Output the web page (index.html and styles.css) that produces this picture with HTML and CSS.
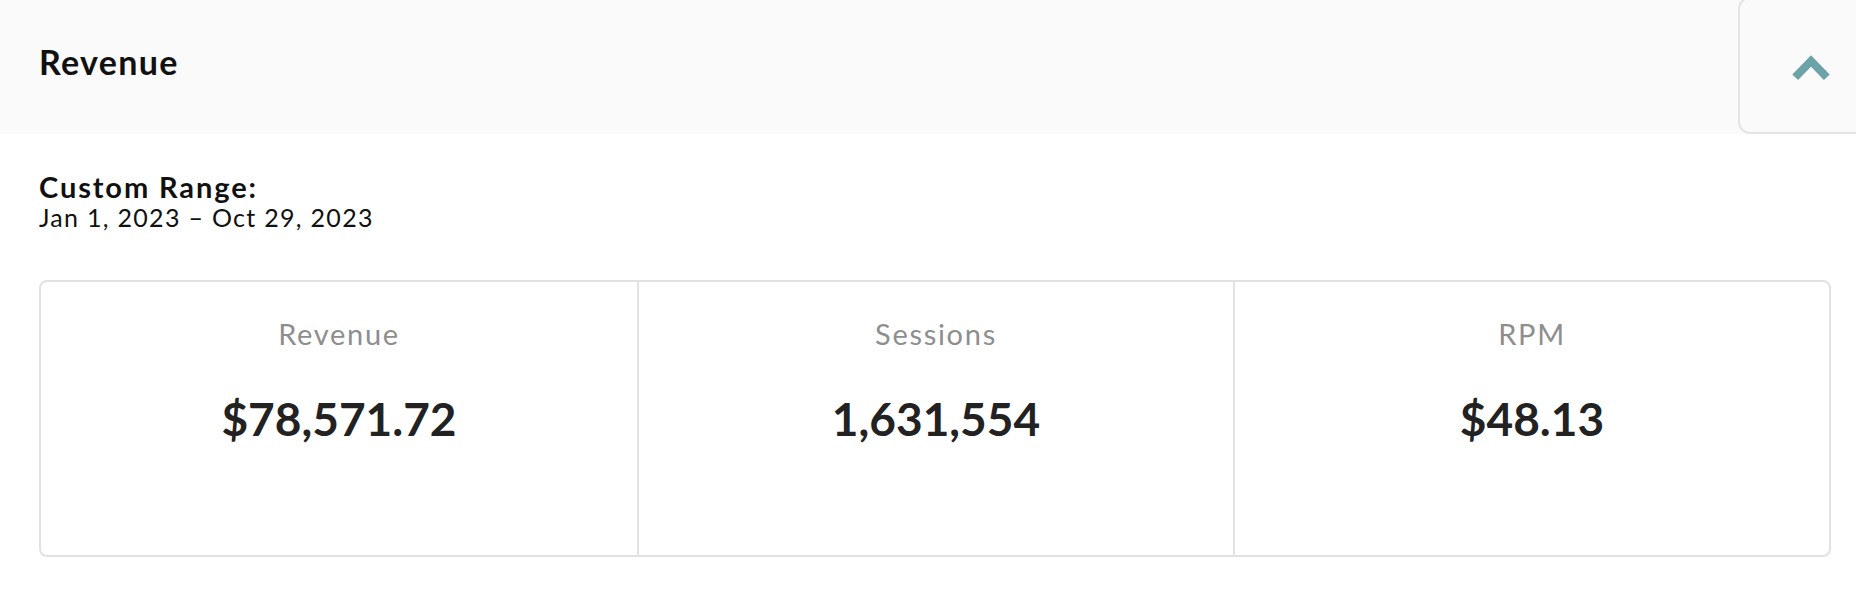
FILE: index.html
```html
<!DOCTYPE html>
<html lang="en">
<head>
  <meta charset="UTF-8">
  <meta name="viewport" content="width=device-width, initial-scale=1.0">
  <title>Revenue</title>
  <link rel="stylesheet" href="styles.css">
</head>
<body>
  <div class="panel-header">
    <h2 class="panel-title">Revenue</h2>
    <button class="toggle-btn" aria-label="Collapse">
      <svg width="40" height="30" viewBox="0 0 40 30">
        <polyline points="4.2,26.3 20,10 35.8,26.3" fill="none" stroke="#6ba3a9" stroke-width="8" stroke-linejoin="miter" stroke-linecap="butt"/>
      </svg>
    </button>
  </div>

  <div class="panel-body">
    <div class="range">
      <div class="range-label">Custom Range:</div>
      <div class="range-dates">Jan 1, 2023 – Oct 29, 2023</div>
    </div>

    <div class="stats">
      <div class="stat">
        <div class="stat-label">Revenue</div>
        <div class="stat-value">$78,571.72</div>
      </div>
      <div class="stat">
        <div class="stat-label">Sessions</div>
        <div class="stat-value">1,631,554</div>
      </div>
      <div class="stat">
        <div class="stat-label">RPM</div>
        <div class="stat-value">$48.13</div>
      </div>
    </div>
  </div>
</body>
</html>
```

FILE: styles.css
```css
/* page */
body {
  margin: 0;
  font-family: 'Lato', 'Noto Sans', sans-serif;
  color: #111;
  background-color: #fff;
}

/* header bar */
.panel-header {
  display: flex;
  align-items: stretch;
  height: 134px;
  background-color: #fafafa;
  overflow: hidden;
}

.panel-title {
  flex: 1;
  display: flex;
  align-items: center;
  margin: 0;
  padding: 0 0 12px 39px;
  font-size: 34px;
  font-weight: 700;
  letter-spacing: 1.3px;
  color: #111;
}

.toggle-btn {
  width: 144px;
  margin: -3px -26px 0 0;
  padding: 0 0 0 2px;
  display: flex;
  align-items: center;
  justify-content: center;
  background-color: #fafafa;
  border: 2px solid #e4e4e4;
  border-radius: 12px;
  cursor: pointer;
}

.toggle-btn svg {
  display: block;
}

/* body */
.panel-body {
  padding: 38px 25px 0 39px;
}

.range-label {
  font-size: 29px;
  font-weight: 700;
  line-height: 29px;
  letter-spacing: 1.9px;
}

.range-dates {
  font-size: 25px;
  line-height: 32px;
  letter-spacing: 1.3px;
}

.stats {
  display: grid;
  grid-template-columns: repeat(3, 1fr);
  margin-top: 47px;
  height: 277px;
  box-sizing: border-box;
  border: 2px solid #e2e2e2;
  border-radius: 8px;
}

.stat {
  text-align: center;
  padding-top: 34px;
}

.stat + .stat {
  border-left: 2px solid #e2e2e2;
}

.stat-label {
  font-size: 29px;
  line-height: 36px;
  letter-spacing: 1.7px;
  color: #8e8e8e;
}

.stat-value {
  margin-top: 39px;
  font-size: 46px;
  font-weight: 700;
  line-height: 56px;
  color: #222;
}
```
